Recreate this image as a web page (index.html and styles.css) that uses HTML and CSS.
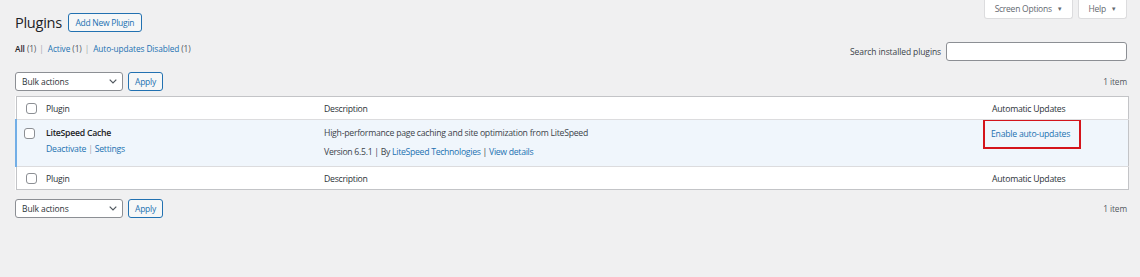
FILE: index.html
```html
<!DOCTYPE html>
<html lang="en">
<head>
<meta charset="utf-8">
<title>Plugins</title>
<link rel="stylesheet" href="styles.css">
</head>
<body>
<div class="screen-meta-links">
  <div class="meta-tab">Screen Options <span class="caret">▼</span></div>
  <div class="meta-tab">Help <span class="caret">▼</span></div>
</div>
<div class="wrap">
  <div class="heading">
    <h1>Plugins</h1>
    <a class="page-title-action">Add New Plugin</a>
  </div>
  <div class="filter-row">
    <ul class="subsubsub">
      <li><span class="current">All</span> <span class="count">(1)</span> <span class="sep">|</span></li>
      <li><a>Active</a> <span class="count">(1)</span> <span class="sep">|</span></li>
      <li><a>Auto-updates Disabled</a> <span class="count">(1)</span></li>
    </ul>
    <div class="search-box">
      <label>Search installed plugins</label>
      <div class="search-input"></div>
    </div>
  </div>
  <div class="tablenav top">
    <div class="bulk">
      <div class="select"><span>Bulk actions</span>
        <svg width="8" height="5" viewBox="0 0 8 5"><path d="M0.7 0.7 L4 4 L7.3 0.7" fill="none" stroke="#50575e" stroke-width="1.2"/></svg>
      </div>
      <div class="button">Apply</div>
    </div>
    <div class="displaying-num">1 item</div>
  </div>
  <table class="plugins">
    <colgroup>
      <col class="c-check"><col class="c-name"><col class="c-desc"><col class="c-auto">
    </colgroup>
    <thead>
      <tr>
        <td class="check"><span class="cb"></span></td>
        <th>Plugin</th>
        <th>Description</th>
        <th>Automatic Updates</th>
      </tr>
    </thead>
    <tbody>
      <tr class="active">
        <th class="check"><span class="cb"></span></th>
        <td class="plugin-title">
          <strong>LiteSpeed Cache</strong>
          <div class="row-actions"><a>Deactivate</a> <span class="sep">|</span> <a>Settings</a></div>
        </td>
        <td class="desc">
          <p class="d1">High-performance page caching and site optimization from LiteSpeed</p>
          <p class="d2">Version 6.5.1 | By <a>LiteSpeed Technologies</a> | <a>View details</a></p>
        </td>
        <td class="auto"><span class="highlight"><a>Enable auto-updates</a></span></td>
      </tr>
    </tbody>
    <tfoot>
      <tr>
        <td class="check"><span class="cb"></span></td>
        <th>Plugin</th>
        <th>Description</th>
        <th>Automatic Updates</th>
      </tr>
    </tfoot>
  </table>
  <div class="tablenav bottom">
    <div class="bulk">
      <div class="select"><span>Bulk actions</span>
        <svg width="8" height="5" viewBox="0 0 8 5"><path d="M0.7 0.7 L4 4 L7.3 0.7" fill="none" stroke="#50575e" stroke-width="1.2"/></svg>
      </div>
      <div class="button">Apply</div>
    </div>
    <div class="displaying-num">1 item</div>
  </div>
</div>
</body>
</html>
```
FILE: styles.css
```css
* { box-sizing: border-box; }
html, body { margin: 0; padding: 0; }
body {
  background: #f0f0f1;
  font-family: "Open Sans", "Noto Sans", sans-serif;
  font-size: 8.7px;
  letter-spacing: -0.25px;
  color: #3c434a;
  width: 1140px;
  height: 277px;
  overflow: hidden;
}
a { color: #2271b1; text-decoration: none; }

.screen-meta-links {
  float: right;
  display: flex;
  gap: 5px;
  margin-right: 13px;
}
.meta-tab {
  height: 19px;
  background: #fff;
  border: 1px solid #dcdcde;
  border-top: none;
  border-radius: 0 0 3px 3px;
  color: #646970;
  line-height: 18px;
  font-size: 8.5px;
  white-space: nowrap;
  text-align: center;
}
.meta-tab:first-child { width: 89px; }
.meta-tab:last-child { width: 49px; }
.caret { font-size: 6px; margin-left: 3px; position: relative; top: -1px; }

.wrap { padding: 13px 13px 0 15px; }

.heading { display: flex; align-items: center; gap: 6px; height: 19px; }
h1 {
  margin: 0;
  font-size: 14.6px;
  font-weight: 400;
  letter-spacing: -0.3px;
  color: #1d2327;
  line-height: 19px;
}
.page-title-action {
  display: block;
  height: 19px;
  width: 74px;
  text-align: center;
  border: 1px solid #2271b1;
  border-radius: 3px;
  background: #f6f7f7;
  color: #2271b1;
  line-height: 17px;
  font-size: 8.5px;
}

.filter-row {
  display: flex;
  justify-content: space-between;
  margin-top: 10px;
  height: 19px;
}
.subsubsub {
  list-style: none;
  margin: 0;
  padding: 0;
  display: flex;
  gap: 3px;
  font-size: 8.3px;
  letter-spacing: -0.1px;
  line-height: 13px;
  color: #646970;
}
.subsubsub li { white-space: nowrap; }
.subsubsub .current { color: #1d2327; font-weight: 600; }
.subsubsub .count { color: #50575e; }
.subsubsub .sep { color: #a7aaad; margin: 0 1px; }
.search-box { display: flex; align-items: center; gap: 5px; }
.search-box label { color: #3c434a; font-size: 8.5px; letter-spacing: -0.1px; }
.search-input {
  width: 181px;
  height: 19px;
  background: #fff;
  border: 1px solid #8c8f94;
  border-radius: 3px;
}

.tablenav {
  display: flex;
  justify-content: space-between;
  align-items: center;
  height: 20px;
}
.tablenav.top { margin-top: 10px; }
.tablenav.bottom { margin-top: 8px; }
.bulk { display: flex; gap: 5px; align-items: center; }
.select {
  width: 108px;
  height: 19px;
  background: #fff;
  border: 1px solid #8c8f94;
  border-radius: 3px;
  display: flex;
  align-items: center;
  justify-content: space-between;
  padding: 0 5px 0 6px;
  color: #2c3338;
  font-size: 8.5px;
  letter-spacing: -0.1px;
}
.button {
  width: 35px;
  height: 19px;
  border: 1px solid #2271b1;
  border-radius: 3px;
  background: #f6f7f7;
  color: #2271b1;
  text-align: center;
  line-height: 17px;
  font-size: 8.5px;
}
.displaying-num { color: #50575e; font-size: 8.3px; letter-spacing: -0.1px; }

table.plugins {
  margin-top: 5px;
  width: 1112px;
  table-layout: fixed;
  border-collapse: collapse;
  background: #fff;
  border: 1px solid #c3c4c7;
}
.c-check { width: 25px; }
.c-name { width: 278px; }
.c-desc { width: 665px; }
.c-auto { width: 144px; }
thead tr, tfoot tr { height: 23px; }
thead { border-bottom: 1px solid #dcdcde; }
tfoot { border-top: 1px solid #dcdcde; }
thead th, tfoot th {
  text-align: left;
  font-weight: 400;
  color: #2c3338;
  padding: 1px 5px 0;
  vertical-align: middle;
}
thead th:last-child, tfoot th:last-child { padding-left: 8px; }
td.check, th.check { padding: 0 0 0 9px; vertical-align: middle; }
.cb {
  display: block;
  width: 11px;
  height: 11px;
  background: #fff;
  border: 1px solid #8c8f94;
  border-radius: 3px;
}
tr.active { background: #f0f6fc; height: 47px; }
tr.active th.check { border-left: 2px solid #72aee6; padding-left: 7px; vertical-align: top; padding-top: 8px; }
tr.active td { vertical-align: top; padding: 7px 5px 0; }
.plugin-title strong { display: block; color: #1d2327; font-weight: 600; line-height: 13px; }
.row-actions { margin-top: 3px; line-height: 12px; }
.row-actions .sep { color: #a7aaad; }
.desc p { margin: 0; line-height: 13px; }
.desc .d1 { color: #3c434a; }
.desc .d2 { margin-top: 6px; color: #3c434a; letter-spacing: -0.3px; }
.desc .d2 a { color: #2271b1; }
td.auto { padding: 0 !important; }
.highlight {
  display: block;
  margin: -1px 0 0 -1px;
  width: 98px;
  height: 30px;
  border: 2px solid #d4141b;
  padding: 7px 0 0 6px;
  line-height: 13px;
}
```
